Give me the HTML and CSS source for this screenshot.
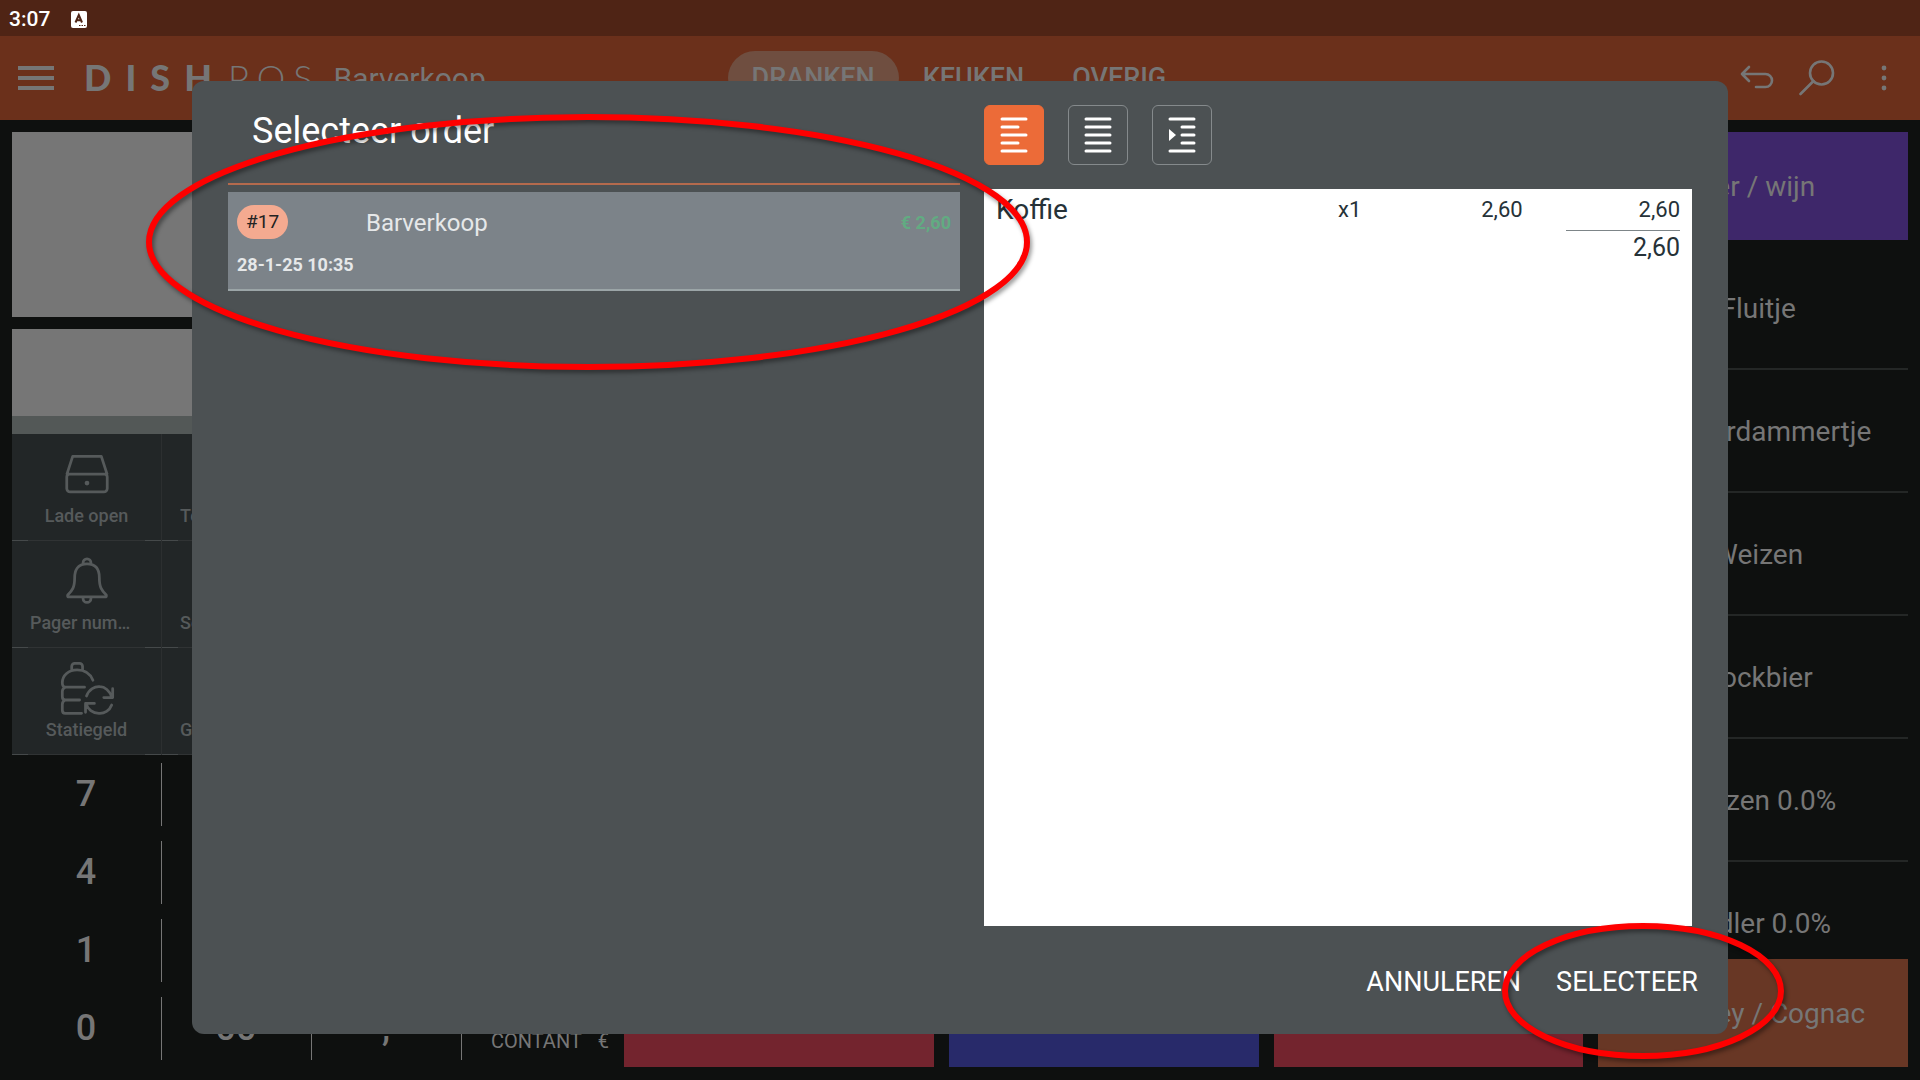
FILE: index.html
```
<!DOCTYPE html>
<html lang="nl">
<head>
  <meta charset="UTF-8" />
  <meta name="viewport" content="width=device-width, initial-scale=1.0"/>
  <title>DISH POS</title>
  <link rel="stylesheet" href="styles.css">
</head>
<body>
  <div class="statusbar">
    <span>3:07</span>
    <svg width="16" height="17" viewBox="0 0 16 17"><rect width="16" height="17" rx="2" fill="#fff"/><path d="M4.5 11.5L7.8 4L11 11.5M5.6 9.3H10" fill="none" stroke="#4f2415" stroke-width="2"/><path d="M8 14.5H14.5" stroke="#4f2415" stroke-width="1" stroke-dasharray="1.5 1"/></svg>
  </div>

  <header class="appbar">
    <button class="icon-btn" aria-label="Menu">
      <svg width="36" height="24" viewBox="0 0 36 24"><path d="M0 2H36M0 12H36M0 22H36" stroke="#767676" stroke-width="4"/></svg>
    </button>
    <div class="logo">
      <div class="logo-dish"><span>D</span><span>I</span><span>S</span><span>H</span></div>
      <div class="logo-pos"><span>P</span><span>O</span><span>S</span></div>
    </div>
    <span class="place">Barverkoop</span>
    <nav class="tabs">
      <button class="tab active">DRANKEN</button>
      <button class="tab">KEUKEN</button>
      <button class="tab">OVERIG</button>
    </nav>
    <div class="actions">
      <button class="icon-btn" aria-label="Ongedaan maken">
        <svg width="36" height="36" viewBox="0 0 36 36" fill="none" stroke="#767676" stroke-width="2.6" stroke-linecap="round" stroke-linejoin="round"><path d="M10 7L3 14L10 21M3 14H26.5A6.5 6.5 0 0 1 26.5 27H17"/></svg>
      </button>
      <button class="icon-btn" aria-label="Zoeken">
        <svg width="36" height="36" viewBox="0 0 36 36" fill="none" stroke="#767676" stroke-width="2.6" stroke-linecap="round"><circle cx="22.5" cy="13" r="11.5"/><path d="M14.5 21L1.5 34"/></svg>
      </button>
      <button class="icon-btn" aria-label="Meer">
        <svg width="6" height="26" viewBox="0 0 6 26" fill="#767676"><circle cx="3" cy="3" r="2.4"/><circle cx="3" cy="13" r="2.4"/><circle cx="3" cy="23" r="2.4"/></svg>
      </button>
    </div>
  </header>

  <main class="pos">
    <section class="left">
      <div class="order-lines"></div>
      <div class="entry"></div>
      <div class="entry-bar"></div>
      <div class="keys">
        <button class="key">
          <svg width="56" height="56" viewBox="0 0 56 56" fill="none" stroke="#565a5b" stroke-width="2.8" stroke-linejoin="round"><path d="M7.5 28L13.5 9.500H42.5L48.5 28M10 27.500H46A3 3 0 0 1 48.500 30.500V42A3.500 3.500 0 0 1 45 45.500H11A3.500 3.500 0 0 1 7.500 42V30.500A3 3 0 0 1 10 27.500Z"/><circle cx="28" cy="36.500" r="2.400" fill="#565a5b" stroke="none"/></svg>
          <span>Lade open</span>
        </button>
        <button class="key"><i></i><span>Tegoed opvragen</span></button>
        <button class="key"><i></i><span>Korting</span></button>
        <button class="key"><i></i><span>Klant</span></button>
        <button class="key">
          <svg width="56" height="56" viewBox="0 0 56 56" fill="none" stroke="#565a5b" stroke-width="2.8" stroke-linejoin="round"><path d="M24 10.500V9A4 4 0 0 1 32 9V10.500M28 10C18 10 15.500 17 15.500 24C15.500 34 13 37 8.500 41.500C8 43 8.500 43.500 10 43.500H46C47.500 43.500 48 43 47.500 41.500C43 37 40.500 34 40.500 24C40.500 17 38 10 28 10ZM24 44V45A4 4 0 0 0 32 45V44"/></svg>
          <span>Pager nummer</span>
        </button>
        <button class="key"><i></i><span>Separaat boeken</span></button>
        <button class="key"><i></i><span>Splitsen</span></button>
        <button class="key"><i></i><span>Tafel</span></button>
        <button class="key">
          <svg width="56" height="56" viewBox="0 0 56 56" fill="none" stroke="#565a5b" stroke-width="2.8" stroke-linecap="round" stroke-linejoin="round"><path d="M12.500 9V5.500A3 3 0 0 1 15.500 2.500H20.500A3 3 0 0 1 23.500 5.500V9M34 19.500C31 12 25 9 18 9C9.500 9 3 14.500 3 22C3 24.500 4 26.500 6 26.500H25.500M6 26.500C3.500 27.500 3 29 3 31V36C3 38 4 39.500 6 39.500H20.500M6 39.500C3.500 40.500 3 42 3 44V49.500C3 51.500 4 53 6 53H22.500M27.500 35.500C30 28.500 36 25.500 41 26C46 26 51 30 53 36.500M54 28V37H45M53 44.500C51 50 45.500 53.500 40 53C34 53 28.500 49 27 43M26.500 52V43H35.500"/></svg>
          <span>Statiegeld</span>
        </button>
        <button class="key"><i></i><span>Gastenaantal wijzigen</span></button>
        <button class="key"><i></i><span>Notitie</span></button>
        <button class="key"><i></i><span>Gang</span></button>
      </div>
      <div class="numpad">
        <button>7</button><button>8</button><button>9</button><button class="pay"></button>
        <button>4</button><button>5</button><button>6</button><button class="pay"></button>
        <button>1</button><button>2</button><button>3</button><button class="pay"></button>
        <button>0</button><button>00</button><button>,</button><button class="pay"><span>CONTANT</span><span>€</span></button>
      </div>
    </section>

    <section class="products">
      <div class="column"><button class="tile red"></button></div>
      <div class="column"><button class="tile blue"></button></div>
      <div class="column"><button class="tile red"></button></div>
      <div class="column">
        <button class="tile purple">Bier / wijn</button>
        <div class="drinks">
          <button class="drink">Fluitje</button>
          <button class="drink">Amsterdammertje</button>
          <button class="drink">Weizen</button>
          <button class="drink">Bockbier</button>
          <button class="drink">Weizen 0.0%</button>
          <button class="drink">Radler 0.0%</button>
        </div>
        <button class="tile brown">Whiskey / Cognac</button>
      </div>
    </section>
  </main>

  <div class="dialog" role="dialog" aria-labelledby="dialogTitle">
    <div class="dialog-body">
      <div class="orders">
        <h1 id="dialogTitle">Selecteer order</h1>
        <div class="order-list">
          <button class="order">
            <span class="badge">#17</span>
            <span class="order-name">Barverkoop</span>
            <span class="order-price">€ 2,60</span>
            <span class="order-date">28-1-25 10:35</span>
          </button>
        </div>
      </div>
      <div class="preview">
        <div class="views">
          <button class="view active" aria-label="Compact">
            <svg width="28" height="36" viewBox="0 0 28 36" stroke="#fff" stroke-width="3" stroke-linecap="round"><path d="M2 2H26M2 10H18M2 18H26M2 26H18M2 34H26"/></svg>
          </button>
          <button class="view" aria-label="Volledig">
            <svg width="28" height="36" viewBox="0 0 28 36" stroke="#fff" stroke-width="3" stroke-linecap="round"><path d="M2 2H26M2 10H26M2 18H26M2 26H26M2 34H26"/></svg>
          </button>
          <button class="view" aria-label="Ingesprongen">
            <svg width="28" height="36" viewBox="0 0 28 36" stroke="#fff" stroke-width="3" stroke-linecap="round"><path d="M2 2H26M14 10H26M14 18H26M14 26H26M2 34H26"/><path d="M1 12L8 18L1 24Z" fill="#fff" stroke="none"/></svg>
          </button>
        </div>
        <div class="receipt">
          <table>
            <tr>
              <td class="item">Koffie</td>
              <td>x1</td>
              <td class="num">2,60</td>
              <td class="num">2,60</td>
            </tr>
            <tr>
              <td colspan="4"><div class="total">2,60</div></td>
            </tr>
          </table>
        </div>
      </div>
    </div>
    <div class="dialog-footer">
      <button>ANNULEREN</button>
      <button>SELECTEER</button>
    </div>
  </div>

  <!-- red markers over the order and the select button -->
  <svg class="markers" viewBox="0 0 1920 1080" preserveAspectRatio="none" fill="none" stroke="#fe0000" stroke-width="6">
    <ellipse cx="588" cy="242" rx="439" ry="125"/>
    <ellipse cx="1643" cy="991" rx="138" ry="65"/>
  </svg>
</body>
</html>
```

FILE: styles.css
```
* {
  box-sizing: border-box;
}
body {
  margin: 0;
  height: 100vh;
  display: flex;
  flex-direction: column;
  overflow: hidden;
  position: relative;
  font-family: Roboto, "Liberation Sans", sans-serif;
  background-color: #0e100f;
  color: #767676;
}
button {
  font: inherit;
  color: inherit;
  background: none;
  border: none;
  padding: 0;
  cursor: pointer;
}
svg {
  display: block;
}

/* top bars */
.statusbar {
  height: 36px;
  padding: 2px 9px 0;
  display: flex;
  align-items: center;
  gap: 21px;
  background-color: #4f2415;
  color: #fff;
  font-size: 21px;
  font-weight: 500;
}
.appbar {
  height: 84px;
  padding: 0 33px 0 18px;
  display: flex;
  align-items: center;
  background-color: #6b301b;
}
.logo {
  display: flex;
  gap: 16px;
  margin-left: 30px;
  padding-bottom: 2px;
  font-family: Lato, sans-serif;
  font-size: 36px;
}
.logo-dish {
  display: flex;
  gap: 14px;
  font-weight: 900;
}
.logo-pos {
  display: flex;
  gap: 8px;
  font-weight: 300;
}
.place {
  width: 394px;
  margin-left: 21px;
  font-size: 30px;
}
.tabs {
  display: flex;
}
.tab {
  height: 54px;
  padding: 0 24px;
  border-radius: 27px;
  font-size: 27px;
  font-weight: 500;
}
.tab.active {
  background-color: #6f4e40;
}
.actions {
  display: flex;
  align-items: center;
  gap: 24px;
  margin-left: auto;
}
.actions .icon-btn:last-child {
  margin-left: 22px;
}

/* till screen */
.pos {
  flex: 1;
  min-height: 0;
  display: flex;
  gap: 12px;
  padding: 12px 12px 13px;
}
.left {
  width: 600px;
  display: flex;
  flex-direction: column;
}
.order-lines {
  flex: 1;
  margin-bottom: 12px;
  background-color: #767676;
}
.entry {
  height: 87px;
  background-color: #767676;
}
.entry-bar {
  height: 18px;
  background-color: #535857;
}
.keys {
  display: grid;
  grid-template-columns: repeat(4, 1fr);
  grid-auto-rows: 107px;
  background-color: #222627;
}
.key {
  min-width: 0;
  padding: 13px 18px;
  display: flex;
  flex-direction: column;
  align-items: center;
  border-right: 1px solid #2c2f30;
  background: linear-gradient(90deg, #45494a 16px, #303334 16px, #303334 calc(100% - 16px), #45494a calc(100% - 16px)) bottom / 100% 1px no-repeat;
  color: #565a5b;
  font-size: 18px;
  font-weight: 500;
}
.key i {
  height: 56px;
}
.key span {
  max-width: 100%;
  margin-top: 2px;
  line-height: 24px;
  overflow: hidden;
  white-space: nowrap;
  text-overflow: ellipsis;
}
.numpad {
  display: grid;
  grid-template-columns: repeat(4, 1fr);
  grid-auto-rows: 78px;
}
.numpad button {
  padding-right: 2px;
  background: linear-gradient(#767676, #767676) right center / 1px 63px no-repeat;
  font-size: 36px;
  font-weight: 500;
}
.numpad .pay {
  display: flex;
  align-items: flex-end;
  justify-content: center;
  gap: 16px;
  padding: 0 0 14px 26px;
  background: none;
  font-size: 20px;
  font-weight: 400;
}
.products {
  flex: 1;
  display: grid;
  grid-template-columns: repeat(4, 1fr);
  gap: 15px;
}
.column {
  min-height: 0;
  display: flex;
  flex-direction: column;
  justify-content: flex-end;
  font-size: 28px;
}
.tile {
  height: 108px;
  flex-shrink: 0;
}
.red {
  background-color: #73242e;
}
.blue {
  background-color: #282a6a;
}
.purple {
  background-color: #3e276a;
}
.brown {
  background-color: #683725;
}
.drinks {
  flex: 1;
  min-height: 0;
  padding-top: 7px;
  overflow: hidden;
}
.drink {
  display: block;
  width: 100%;
  height: 123px;
  padding: 2px 0 0 10px;
  border-bottom: 2px solid #242726;
}

/* order dialog */
.dialog {
  position: absolute;
  top: 81px;
  right: 10%;
  bottom: 46px;
  left: 10%;
  display: flex;
  flex-direction: column;
  border-radius: 12px;
  background-color: #4c5153;
  color: #fff;
}
.dialog-body {
  flex: 1;
  display: grid;
  grid-template-columns: 732fr 708fr;
  gap: 24px;
  padding: 24px 36px 0;
}
.orders h1 {
  margin: 0 0 26px 24px;
  font-size: 36px;
  line-height: 52px;
  font-weight: 400;
}
.order-list {
  padding-top: 7px;
  border-top: 2px solid #b46a4d;
}
.order {
  width: 100%;
  height: 99px;
  padding: 13px 9px 8px;
  display: grid;
  grid-template-columns: 129px 1fr auto;
  grid-template-rows: 34px 1fr;
  align-items: center;
  text-align: left;
  background-color: #7c8389;
  border-bottom: 2px solid #9ba5a7;
  color: #e6e8e9;
  font-size: 18px;
}
.badge {
  justify-self: start;
  padding: 0 9px;
  border-radius: 17px;
  background-color: #f4aa90;
  color: #222;
  font-size: 19px;
  line-height: 34px;
}
.order-name {
  padding-top: 2px;
  font-size: 24px;
}
.order-price {
  color: #62ab82;
  font-weight: 700;
}
.order-date {
  grid-column: 1 / 4;
  padding-top: 8px;
  font-weight: 700;
}
.preview {
  display: flex;
  flex-direction: column;
  gap: 24px;
}
.views {
  display: flex;
  gap: 24px;
}
.view {
  width: 60px;
  height: 60px;
  display: flex;
  align-items: center;
  justify-content: center;
  border: 1px solid #858a8c;
  border-radius: 6px;
}
.view.active {
  background-color: #ec6b38;
  border-color: #ec6b38;
}
.receipt {
  flex: 1;
  padding: 0 12px;
  background-color: #fff;
  color: #263238;
}
table {
  width: 100%;
  border-collapse: collapse;
  font-size: 22px;
}
td {
  width: 15%;
  height: 41px;
  padding: 0;
  vertical-align: top;
  line-height: 41px;
}
.item {
  width: 50%;
  font-size: 28px;
}
.num {
  width: 23%;
  text-align: right;
}
.num:nth-child(3) {
  width: 12%;
}
.total {
  width: 114px;
  margin-left: auto;
  border-top: 1px solid #7d8588;
  font-size: 25px;
  line-height: 34px;
  text-align: right;
}
.dialog-footer {
  height: 108px;
  display: flex;
  align-items: center;
  justify-content: flex-end;
  gap: 35px;
  padding: 3px 30px 0;
  font-size: 27px;
}

.markers {
  position: absolute;
  top: 0;
  left: 0;
  width: 100%;
  height: 100%;
  pointer-events: none;
  filter: drop-shadow(2px 3px 2px rgba(0, 0, 0, 0.4));
}
```
